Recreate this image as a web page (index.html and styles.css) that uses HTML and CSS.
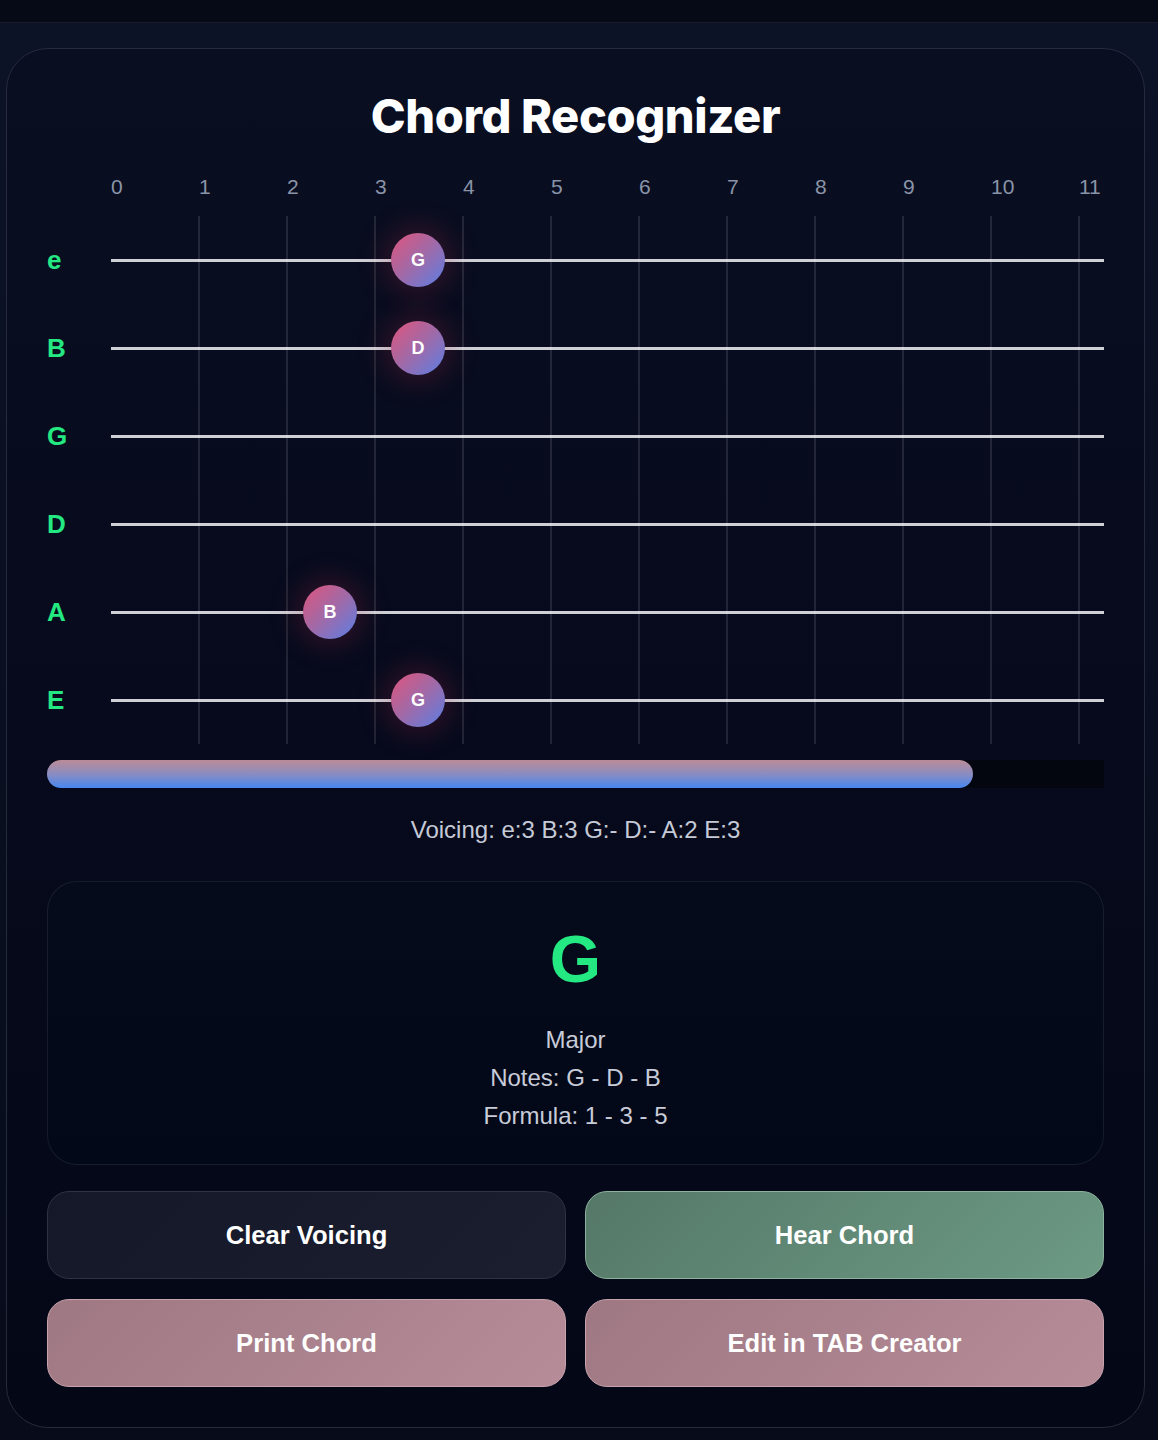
FILE: index.html
```html
<!DOCTYPE html>
<html lang="en">
<head>
<meta charset="utf-8">
<title>Chord Recognizer</title>
<link rel="stylesheet" href="styles.css">
</head>
<body>
<div class="page">
  <main class="card">
    <h1 class="title">Chord Recognizer</h1>
    <div class="fretboard">
      <div class="fret-numbers">
        <div class="label-spacer"></div>
        <div class="num-cells">
          <span>0</span><span>1</span><span>2</span><span>3</span><span>4</span><span>5</span>
          <span>6</span><span>7</span><span>8</span><span>9</span><span>10</span><span>11</span>
        </div>
      </div>
      <div class="string-row">
        <span class="string-label">e</span>
        <div class="track">
          <div class="cell"></div><div class="cell"></div><div class="cell"></div>
          <div class="cell"><span class="note">G</span></div>
          <div class="cell"></div><div class="cell"></div><div class="cell"></div><div class="cell"></div>
          <div class="cell"></div><div class="cell"></div><div class="cell"></div><div class="cell"></div>
        </div>
      </div>
      <div class="string-row">
        <span class="string-label">B</span>
        <div class="track">
          <div class="cell"></div><div class="cell"></div><div class="cell"></div>
          <div class="cell"><span class="note">D</span></div>
          <div class="cell"></div><div class="cell"></div><div class="cell"></div><div class="cell"></div>
          <div class="cell"></div><div class="cell"></div><div class="cell"></div><div class="cell"></div>
        </div>
      </div>
      <div class="string-row">
        <span class="string-label">G</span>
        <div class="track">
          <div class="cell"></div><div class="cell"></div><div class="cell"></div><div class="cell"></div>
          <div class="cell"></div><div class="cell"></div><div class="cell"></div><div class="cell"></div>
          <div class="cell"></div><div class="cell"></div><div class="cell"></div><div class="cell"></div>
        </div>
      </div>
      <div class="string-row">
        <span class="string-label">D</span>
        <div class="track">
          <div class="cell"></div><div class="cell"></div><div class="cell"></div><div class="cell"></div>
          <div class="cell"></div><div class="cell"></div><div class="cell"></div><div class="cell"></div>
          <div class="cell"></div><div class="cell"></div><div class="cell"></div><div class="cell"></div>
        </div>
      </div>
      <div class="string-row">
        <span class="string-label">A</span>
        <div class="track">
          <div class="cell"></div><div class="cell"></div>
          <div class="cell"><span class="note">B</span></div>
          <div class="cell"></div>
          <div class="cell"></div><div class="cell"></div><div class="cell"></div><div class="cell"></div>
          <div class="cell"></div><div class="cell"></div><div class="cell"></div><div class="cell"></div>
        </div>
      </div>
      <div class="string-row">
        <span class="string-label">E</span>
        <div class="track">
          <div class="cell"></div><div class="cell"></div><div class="cell"></div>
          <div class="cell"><span class="note">G</span></div>
          <div class="cell"></div><div class="cell"></div><div class="cell"></div><div class="cell"></div>
          <div class="cell"></div><div class="cell"></div><div class="cell"></div><div class="cell"></div>
        </div>
      </div>
    </div>

    <div class="progress"><div class="progress-fill" style="width:87.6%"></div></div>
    <p class="voicing">Voicing: e:3 B:3 G:- D:- A:2 E:3</p>

    <section class="result">
      <div class="chord-name">G</div>
      <div class="chord-info">
        <p>Major</p>
        <p>Notes: G - D - B</p>
        <p>Formula: 1 - 3 - 5</p>
      </div>
    </section>

    <div class="actions">
      <button class="btn btn-dark">Clear Voicing</button>
      <button class="btn btn-green">Hear Chord</button>
      <button class="btn btn-rose">Print Chord</button>
      <button class="btn btn-rose">Edit in TAB Creator</button>
    </div>
  </main>
</div>
</body>
</html>
```

FILE: styles.css
```css
* { box-sizing: border-box; }

html, body {
  margin: 0;
  padding: 0;
}

body {
  background: #060a16;
  font-family: "Liberation Sans", Arial, sans-serif;
  color: #c8ccd8;
  min-height: 1440px;
}

.page {
  margin-top: 22px;
  border-top: 1px solid rgba(255, 255, 255, 0.07);
  background: linear-gradient(180deg, #0c1326 0%, #070b1a 100%);
  padding: 25px 13px 12px 6px;
  min-height: 1418px;
}

.card {
  width: 1139px;
  border: 1.5px solid #262a3c;
  border-radius: 42px;
  background: linear-gradient(180deg, #090e20 0%, #060a1c 50%, #030716 100%);
  padding: 40px 40px 40px 40px;
}

.title {
  margin: 0 0 18px;
  text-align: center;
  font-family: Inter, "Liberation Sans", sans-serif;
  font-weight: 800;
  font-size: 47px;
  line-height: 53px;
  letter-spacing: -0.4px;
  color: #ffffff;
}

.fretboard {
  display: flex;
  flex-direction: column;
}

.fret-numbers {
  display: flex;
  height: 56px;
  align-items: center;
  padding-bottom: 3px;
}

.label-spacer {
  width: 63px;
  flex-shrink: 0;
}

.num-cells {
  display: flex;
  flex: 1;
  min-width: 0;
}

.num-cells span {
  width: 88px;
  flex-shrink: 0;
  padding-left: 1px;
  font-size: 21px;
  color: #8a94a9;
}

.string-row {
  display: flex;
  height: 88px;
  align-items: stretch;
}

.string-label {
  width: 63px;
  flex-shrink: 0;
  display: flex;
  align-items: center;
  font-weight: 700;
  font-size: 26px;
  color: #24e882;
}

.track {
  flex: 1;
  min-width: 0;
  display: flex;
  background: linear-gradient(#cfd0d6, #cfd0d6) 1px center / calc(100% - 1px) 3px no-repeat;
}

.cell {
  width: 88px;
  flex-shrink: 0;
  display: flex;
  align-items: center;
  justify-content: center;
}

.cell + .cell {
  border-left: 2px solid rgba(255, 255, 255, 0.11);
}

.note {
  width: 54px;
  height: 54px;
  border-radius: 50%;
  margin-left: -2px;
  display: flex;
  align-items: center;
  justify-content: center;
  background: linear-gradient(135deg, #e0547a 0%, #a06aa8 50%, #5a7ee6 100%);
  box-shadow: 0 0 28px 8px rgba(170, 40, 80, 0.24);
  color: #ffffff;
  font-weight: 700;
  font-size: 18px;
}

.progress {
  margin-top: 16px;
  height: 28px;
  background: #04060f;
  border-radius: 14px 0 0 14px;
}

.progress-fill {
  height: 100%;
  border-radius: 14px;
  background: linear-gradient(180deg, #bb8c98 0%, #8a8cc0 50%, #4688f2 100%);
}

.voicing {
  margin: 29px 0 0;
  text-align: center;
  font-size: 24px;
  line-height: 26px;
  color: #c5cad6;
}

.result {
  margin-top: 38px;
  height: 284px;
  border: 1.5px solid rgba(255, 255, 255, 0.08);
  border-radius: 30px;
  background: linear-gradient(180deg, #060b1c 0%, #030818 100%);
  padding-top: 39px;
  text-align: center;
}

.chord-name {
  font-weight: 700;
  font-size: 66px;
  line-height: 77px;
  color: #24e882;
  margin-bottom: 23px;
}

.chord-info p {
  margin: 0;
  font-size: 24px;
  line-height: 38px;
  color: #c8ccd8;
}

.actions {
  margin-top: 26px;
  display: grid;
  grid-template-columns: 1fr 1fr;
  gap: 20px 19px;
}

.btn {
  height: 88px;
  border-radius: 22px;
  font-family: "Liberation Sans", Arial, sans-serif;
  font-weight: 700;
  font-size: 25.6px;
  color: #ffffff;
  cursor: pointer;
}

.btn-dark {
  background: linear-gradient(135deg, #141828 0%, #1a1e2e 100%);
  border: 1.5px solid #2e3344;
}

.btn-green {
  background: linear-gradient(135deg, #557868 0%, #6c9a84 100%);
  border: 1.5px solid #8db29c;
}

.btn-rose {
  background: linear-gradient(135deg, #9e7882 0%, #b68c98 100%);
  border: 1.5px solid #c8a2ac;
}
```
